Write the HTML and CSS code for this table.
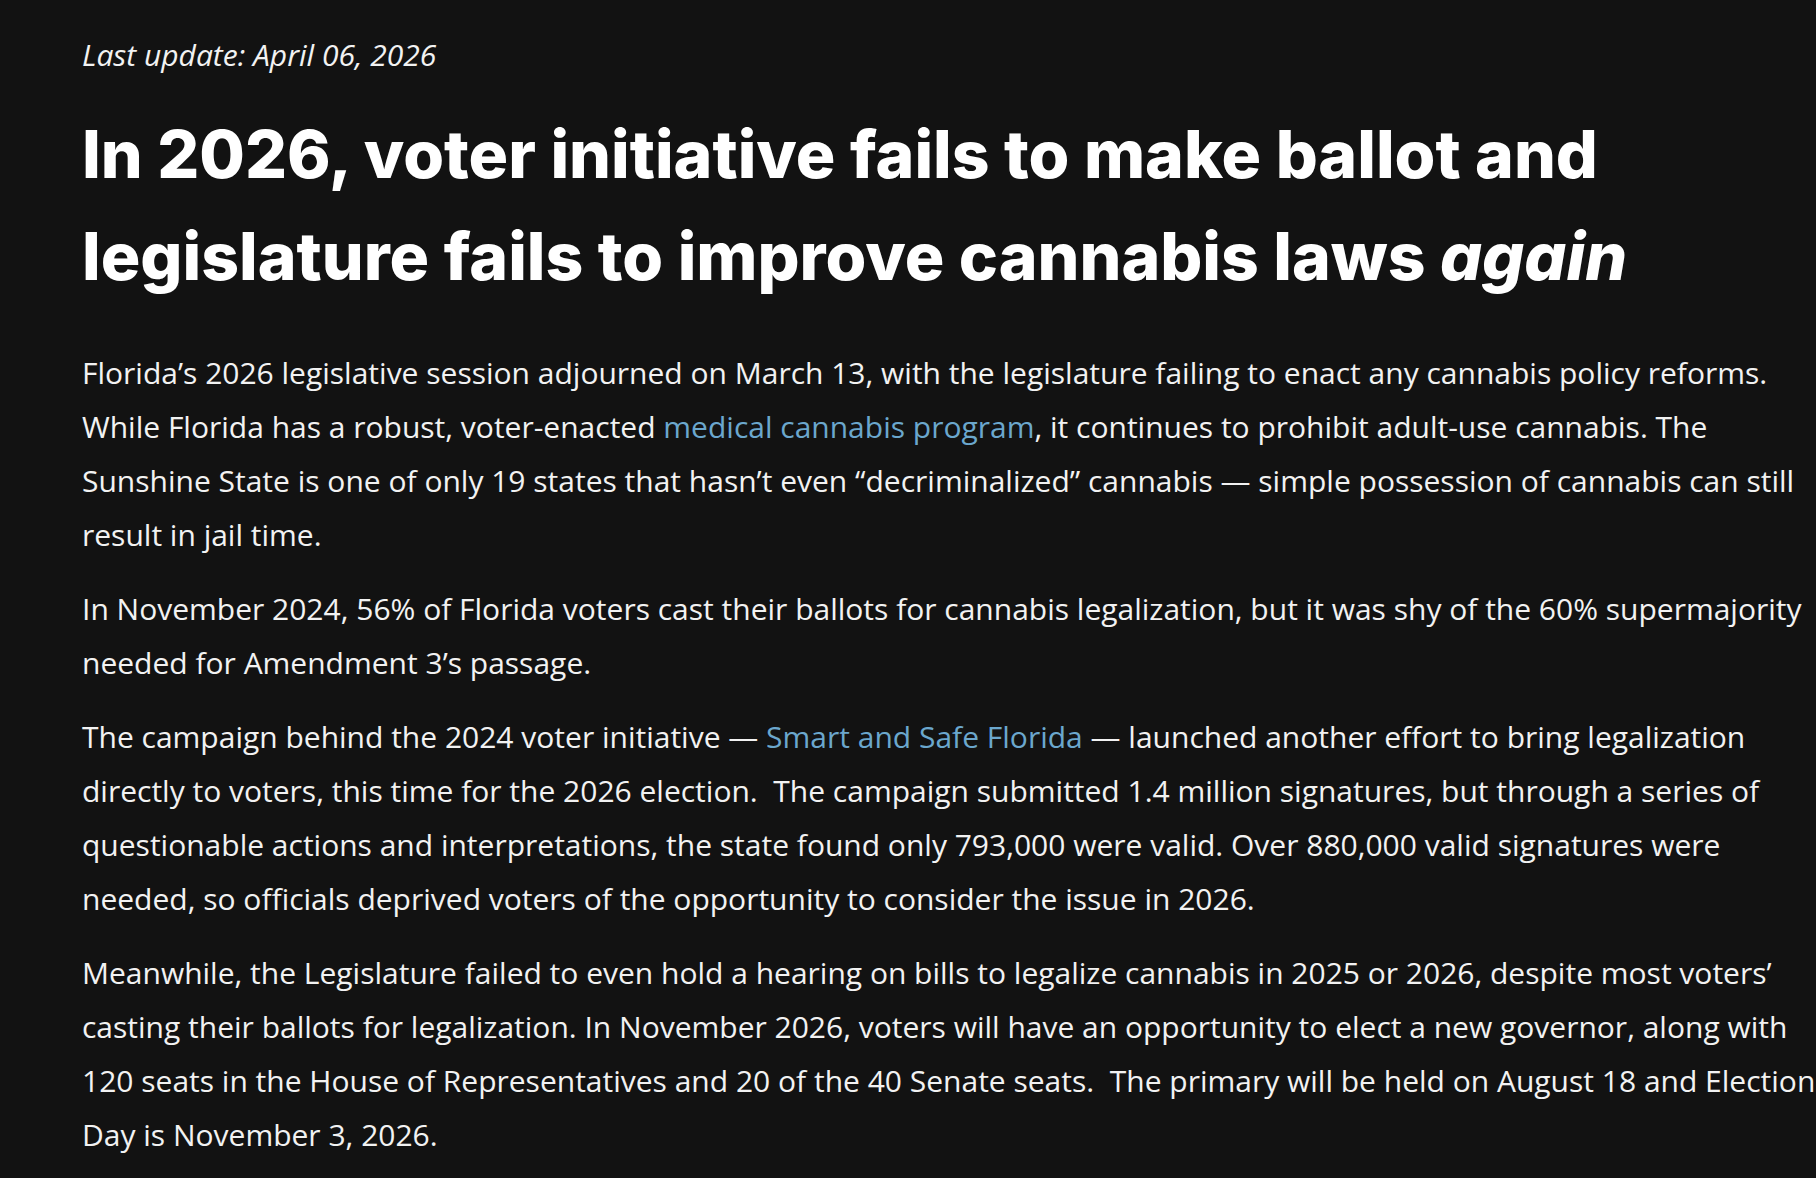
FILE: index.html
```html
<!DOCTYPE html>
<html lang="en">
<head>
<meta charset="utf-8">
<title>Florida cannabis policy update</title>
<link rel="stylesheet" href="styles.css">
</head>
<body>
<main class="article">
  <p class="updated">Last update: April 06, 2026</p>
  <h1 class="title">In 2026, voter initiative fails to make ballot and legislature fails to improve cannabis laws <em>again</em></h1>
  <div class="body">
    <p>Florida’s 2026 legislative session adjourned on March 13, with the legislature failing to enact any cannabis policy reforms. While Florida has a robust, voter-enacted <a href="#">medical cannabis program</a>, it continues to prohibit adult-use cannabis. The Sunshine State is one of only 19 states that hasn’t even “decriminalized” cannabis — simple possession of cannabis can still result in jail time.</p>
    <p>In November 2024, 56% of Florida voters cast their ballots for cannabis legalization, but it was shy of the 60% supermajority needed for Amendment 3’s passage.</p>
    <p>The campaign behind the 2024 voter initiative — <a href="#">Smart and Safe Florida</a> — launched another effort to bring legalization directly to voters, this time for the 2026 election.&nbsp; The campaign submitted 1.4 million signatures, but through a series of questionable actions and interpretations, the state found only 793,000 were valid. Over 880,000 valid signatures were needed, so officials deprived voters of the opportunity to consider the issue in 2026.</p>
    <p>Meanwhile, the Legislature failed to even hold a hearing on bills to legalize cannabis in 2025 or 2026, despite most voters’ casting their ballots for legalization. In November 2026, voters will have an opportunity to elect a new governor, along with 120 seats in the House of Representatives and 20 of the 40 Senate seats.&nbsp; The primary will be held on August 18 and Election Day is November 3, 2026.</p>
  </div>
</main>
</body>
</html>
```
FILE: styles.css
```css
html {
  overflow-x: hidden;
}
body {
  margin: 0;
  background: #121212;
  color: #f2f2f2;
  font-family: "Open Sans", "Liberation Sans", sans-serif;
  overflow-x: hidden;
}
.article {
  padding: 34px 0 0 82px;
  width: 1740px;
}
.updated {
  margin: 0;
  font-style: italic;
  font-size: 30px;
  line-height: 42px;
  color: #f2f2f2;
}
.title {
  margin: 27px 0 0;
  font-family: Inter, "Liberation Sans", sans-serif;
  font-weight: 800;
  font-size: 66px;
  line-height: 102px;
  letter-spacing: 0;
  color: #ffffff;
}
.title em {
  font-style: italic;
}
.body {
  margin-top: 39px;
}
.body p {
  margin: 0 0 20px;
  font-size: 30px;
  line-height: 54px;
}
.body a {
  color: #6ba7cd;
  text-decoration: none;
}
```
